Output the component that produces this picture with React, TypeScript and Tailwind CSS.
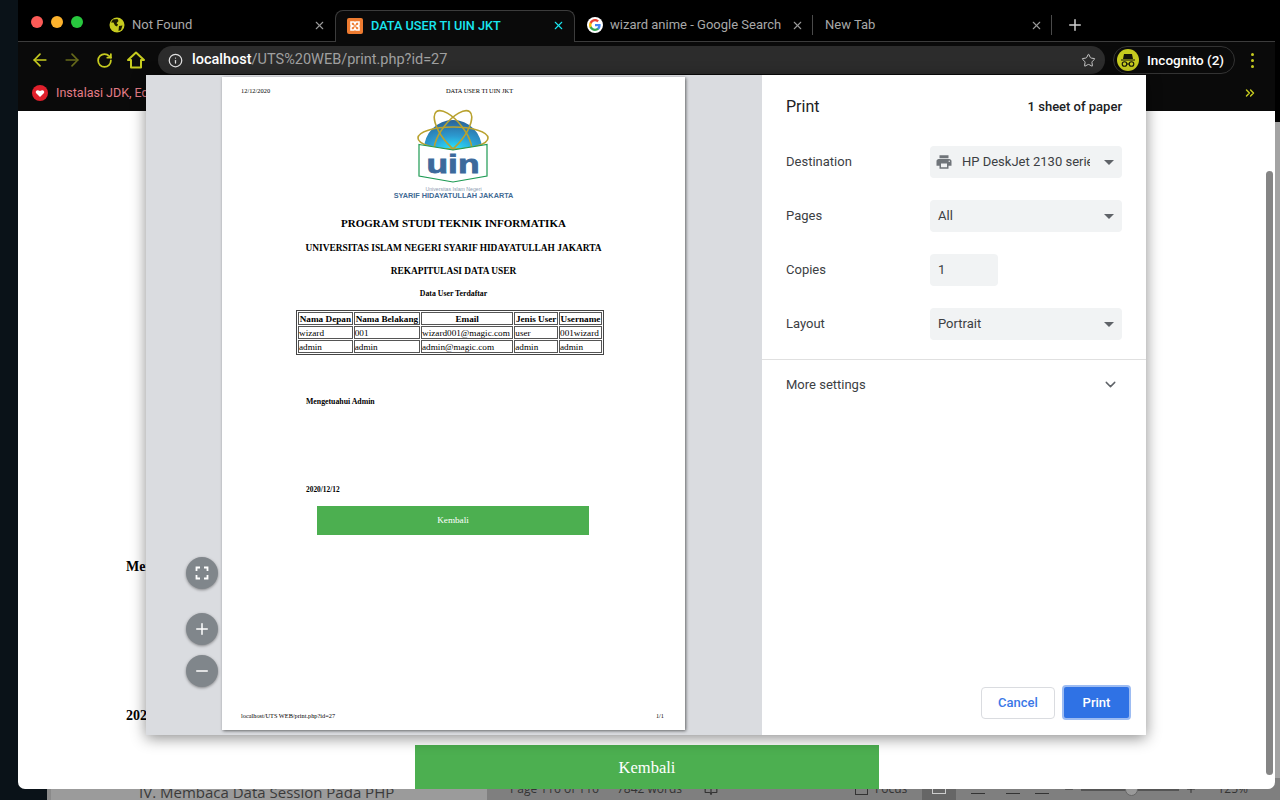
import { ArrowLeft, ArrowRight, BookOpen, ChevronDown, ChevronsRight, Info, Minus, Plus, RotateCw, Star, X } from 'lucide-react';

const ui = "font-['Roboto',sans-serif]";
const serif = "font-['Liberation_Serif',serif]";

function GlobeIcon() {
  return (
    <svg width="16" height="16" viewBox="0 0 16 16" className="shrink-0">
      <circle cx="8" cy="8" r="7.5" fill="#c6cb1f" />
      <path d="M4 2.5 8.5 2l1 2-2 2.2 1.5 1.3-1 2-2-1-1.500-3L2 5.500ZM10 9l3.500-.5L12 13l-2.500 1Z" fill="#1a1a00" />
    </svg>
  );
}

function XamppIcon() {
  return (
    <svg width="16" height="16" viewBox="0 0 16 16" className="shrink-0">
      <rect width="16" height="16" rx="2" fill="#ee7b30" />
      <path d="M4 4h3l1 2 1-2h3v3l-2 1 2 1v3H9L8 10l-1 2H4V9l2-1-2-1Z" fill="none" stroke="#fff" strokeWidth="1.6" />
    </svg>
  );
}

function GoogleIcon() {
  return (
    <svg width="16" height="16" viewBox="0 0 48 48" className="shrink-0">
      <circle cx="24" cy="24" r="24" fill="#fff" />
      <path fill="#4285F4" d="M41 24.500c0-1.300-.1-2.500-.3-3.700H24v7h9.600c-.4 2.200-1.700 4.100-3.500 5.300v4.500h5.700C39.100 34.500 41 30 41 24.500z" />
      <path fill="#34A853" d="M24 42c4.800 0 8.800-1.600 11.800-4.300l-5.700-4.500c-1.600 1.100-3.600 1.700-6.100 1.700-4.600 0-8.600-3.100-10-7.300H8.100v4.600C11 37.900 17 42 24 42z" />
      <path fill="#FBBC05" d="M14 27.600c-.4-1.100-.6-2.300-.6-3.600s.2-2.500.6-3.600v-4.600H8.100C6.800 18.200 6 21 6 24s.8 5.800 2.100 8.200z" />
      <path fill="#EA4335" d="M24 13.100c2.600 0 5 .9 6.800 2.700l5.100-5.100C32.800 7.800 28.800 6 24 6 17 6 11 10.100 8.100 15.800l5.900 4.600c1.400-4.200 5.400-7.300 10-7.300z" />
    </svg>
  );
}

function Tab({ icon, title, width, active, sep }: { icon?: React.ReactNode; title: string; width: string; active?: boolean; sep?: boolean }) {
  return (
    <div className={`${width} h-[32px] flex items-center shrink-0 relative pb-[2px] ${active ? 'bg-[#0a0a0a] border border-b-0 border-[#3c3c3c] rounded-t-[8px] pl-[11px] pr-[9px] text-[#19e6f0]' : 'text-[#a8a8a8] pl-[12px] pr-[9px]'}`}>
      {icon}
      <span className={`${active ? 'ml-[8px] text-[12.700px] font-medium' : icon ? 'ml-[7px] text-[13px]' : 'text-[13px]'} whitespace-nowrap flex-1`}>{title}</span>
      <X size={13} strokeWidth={2} className={active ? 'text-[#19e6f0]' : 'text-[#9a9a9a]'} />
      {sep && <div className="absolute right-0 top-[5px] h-[20px] w-px bg-[#4a4a4a]" />}
    </div>
  );
}

function Logo() {
  return (
    <svg width="76" height="78" viewBox="0 0 76 78" className="block">
      <defs>
        <radialGradient id="dome" cx="50%" cy="100%" r="100%">
          <stop offset="0%" stopColor="#27e6ff" />
          <stop offset="45%" stopColor="#2c9ad0" />
          <stop offset="100%" stopColor="#2b6296" />
        </radialGradient>
      </defs>
      <path d="M8 40a29 29 0 0 1 58 0Z" fill="url(#dome)" />
      <g fill="none" stroke="#b9a22f" strokeWidth="1.600">
        <ellipse cx="37" cy="29" rx="35" ry="11" />
        <ellipse cx="37" cy="24" rx="27" ry="11" transform="rotate(52 37 24)" />
        <ellipse cx="37" cy="24" rx="27" ry="11" transform="rotate(-52 37 24)" />
      </g>
      <path d="M3 35.500 37 41l34-5.500V67L37 73 3 67Z" fill="#fff" stroke="#1d9a53" strokeWidth="1.200" />
      <text x="37" y="63.500" textAnchor="middle" textLength="53" lengthAdjust="spacingAndGlyphs" fill="#3c6a9c" stroke="#3c6a9c" strokeWidth="0.800" fontFamily="Liberation Sans" fontWeight="700" fontSize="26">uin</text>
    </svg>
  );
}

function ZoomButton({ children, className }: { children: React.ReactNode; className: string }) {
  return (
    <div className={`absolute left-[40px] w-[32px] h-[32px] rounded-full bg-[#80868b] flex items-center justify-center shadow-[0_1px_3px_rgba(0,0,0,0.4)] text-white ${className}`}>
      {children}
    </div>
  );
}

function Caret() {
  return <div className="w-0 h-0 border-l-[5px] border-r-[5px] border-t-[5px] border-l-transparent border-r-transparent border-t-[#5f6368]" />;
}

function Row({ label, children }: { label: string; children: React.ReactNode }) {
  return (
    <div className="flex items-center h-[32px] mb-[22px]">
      <div className="w-[144px] text-[13px] text-[#3c4043]">{label}</div>
      {children}
    </div>
  );
}

const cell = 'border border-[#555] px-0 pt-[2px] pb-0 text-left whitespace-nowrap font-normal h-[13px] leading-[9px]';
const headCell = 'border border-[#555] px-0 pt-[2px] pb-0 whitespace-nowrap font-bold h-[13px] leading-[9px]';

const users = [
  ['wizard', '001', 'wizard001@magic.com', 'user', '001wizard'],
  ['admin', 'admin', 'admin@magic.com', 'admin', 'admin'],
];

function Paper() {
  return (
    <div className={`w-[463px] h-[653px] bg-white shadow-[1px_1px_3px_rgba(0,0,0,0.55)] relative flex flex-col shrink-0 text-black ${serif}`}>
      <div className="flex pt-[10px] pl-[19px] h-[22px] text-[6.400px] leading-[8px]">
        <span className="w-[105px]">12/12/2020</span>
        <span className="w-[267px] text-center">DATA USER TI UIN JKT</span>
      </div>
      <div className="flex flex-col items-center mt-[10px]">
        <Logo />
        <div className="font-['Liberation_Sans',sans-serif] text-[5.200px] leading-[6px] text-[#8d9cb2] mt-[-1px]">Universitas Islam Negeri</div>
        <div className="font-['Liberation_Sans',sans-serif] font-bold text-[7.300px] leading-[8px] text-[#3f6a94]">SYARIF HIDAYATULLAH JAKARTA</div>
      </div>
      <div className="text-center font-bold">
        <div className="text-[11px] leading-[13px] mt-[17px]">PROGRAM STUDI TEKNIK INFORMATIKA</div>
        <div className="text-[9.400px] leading-[11px] mt-[13px]">UNIVERSITAS ISLAM NEGERI SYARIF HIDAYATULLAH JAKARTA</div>
        <div className="text-[9.400px] leading-[11px] mt-[12px]">REKAPITULASI DATA USER</div>
        <div className="text-[7.800px] leading-[9px] mt-[12px]">Data User Terdaftar</div>
      </div>
      <table className="border border-[#444] border-separate border-spacing-[1px] text-[9.200px] ml-[74px] mt-[12px] w-[308px]">
        <thead>
          <tr>
            {['Nama Depan', 'Nama Belakang', 'Email', 'Jenis User', 'Username'].map(h => (
              <th key={h} className={headCell}>{h}</th>
            ))}
          </tr>
        </thead>
        <tbody>
          {users.map(u => (
            <tr key={u[0]}>
              {u.map((c, i) => <td key={i} className={cell}>{c}</td>)}
            </tr>
          ))}
        </tbody>
      </table>
      <div className="ml-[84px] mt-[42px] text-[7.800px] leading-[9px] font-bold">Mengetuahui Admin</div>
      <div className="ml-[84px] mt-[79px] text-[7.400px] leading-[9px] font-bold">2020/12/12</div>
      <div className="ml-[95px] mt-[12px] w-[272px] h-[29px] bg-[#4caf50] text-white text-[9.200px] flex items-center justify-center">Kembali</div>
      <div className="mt-auto mb-[10px] pl-[19px] pr-[21px] flex justify-between text-[6.300px] leading-[8px]">
        <span>localhost/UTS WEB/print.php?id=27</span>
        <span>1/1</span>
      </div>
    </div>
  );
}

function PrintDialog() {
  return (
    <div className={`absolute left-[146px] top-[75px] w-[1000px] h-[660px] flex shadow-[0_3px_14px_rgba(0,0,0,0.45)] ${ui}`}>
      <div className="w-[616px] bg-[#dadce0] relative pl-[76px] pt-[2px] flex">
        <Paper />
        <ZoomButton className="top-[482px]">
          <svg width="14" height="14" viewBox="0 0 14 14" fill="none" stroke="#fff" strokeWidth="1.800">
            <path d="M1.500 5V1.500H5M9 1.500h3.500V5M12.500 9v3.500H9M5 12.500H1.500V9" />
          </svg>
        </ZoomButton>
        <ZoomButton className="top-[538px]"><Plus size={18} strokeWidth={2} /></ZoomButton>
        <ZoomButton className="top-[580px]"><Minus size={18} strokeWidth={2} /></ZoomButton>
      </div>
      <div className="flex-1 bg-white flex flex-col">
        <div className="flex items-center justify-between pl-[24px] pr-[24px] h-[64px]">
          <div className="text-[16px] text-[#202124]">Print</div>
          <div className="text-[13px] font-medium text-[#202124]">1 sheet of paper</div>
        </div>
        <div className="pl-[24px] pr-[24px] pt-[7px]">
          <Row label="Destination">
            <div className="w-[192px] h-[32px] rounded-[4px] bg-[#f1f3f4] flex items-center pl-[5px] pr-[8px]">
              <svg width="18" height="18" viewBox="0 0 24 24" fill="#70757a" className="shrink-0">
                <path d="M19 8H5c-1.660 0-3 1.340-3 3v6h4v4h12v-4h4v-6c0-1.660-1.340-3-3-3zm-3 11H8v-5h8v5zm3-7c-.55 0-1-.45-1-1s.45-1 1-1 1 .45 1 1-.45 1-1 1zm-1-9H6v4h12V3z" />
              </svg>
              <div className="ml-[9px] w-[128px] overflow-hidden whitespace-nowrap text-[13px] text-[#3c4043]">HP DeskJet 2130 series</div>
              <div className="ml-auto"><Caret /></div>
            </div>
          </Row>
          <Row label="Pages">
            <div className="w-[192px] h-[32px] rounded-[4px] bg-[#f1f3f4] flex items-center pl-[8px] pr-[8px] text-[13px] text-[#3c4043] justify-between">
              <span>All</span>
              <Caret />
            </div>
          </Row>
          <Row label="Copies">
            <div className="w-[68px] h-[32px] rounded-[4px] bg-[#f1f3f4] flex items-center pl-[8px] text-[13px] text-[#3c4043]">1</div>
          </Row>
          <div className="flex items-center h-[32px]">
            <div className="w-[144px] text-[13px] text-[#3c4043]">Layout</div>
            <div className="w-[192px] h-[32px] rounded-[4px] bg-[#f1f3f4] flex items-center pl-[8px] pr-[8px] text-[13px] text-[#3c4043] justify-between">
              <span>Portrait</span>
              <Caret />
            </div>
          </div>
        </div>
        <div className="mt-[19px] border-t border-[#e0e0e0] flex items-center justify-between pl-[24px] pr-[27px] h-[50px]">
          <span className="text-[13px] text-[#3c4043]">More settings</span>
          <ChevronDown size={17} strokeWidth={2} className="text-[#5f6368]" />
        </div>
        <div className="mt-auto flex items-center justify-end gap-[7px] pr-[15px] pb-[15px]">
          <div className="w-[74px] h-[32px] rounded-[4px] border border-[#dadce0] bg-white text-[#3b78e7] text-[13px] font-medium flex items-center justify-center">Cancel</div>
          <div className="w-[69px] h-[35px] rounded-[4px] border-2 border-[#9dbcf2] bg-[#2f72e5] text-white text-[13px] font-medium flex items-center justify-center">Print</div>
        </div>
      </div>
    </div>
  );
}

function Browser() {
  return (
    <div className={`absolute left-[18px] top-0 w-[1257px] h-[789px] flex flex-col overflow-hidden rounded-b-[7px] ${ui}`}>
      <div className="h-[42px] shrink-0 bg-black border-b border-[#3c3c3c] flex items-end">
        <div className="w-[79px] h-[32px] shrink-0 flex items-start gap-[8px] pl-[13px] pt-[6px] mb-[-1px]">
          <div className="w-[12px] h-[12px] rounded-full bg-[#fc5b57]" />
          <div className="w-[12px] h-[12px] rounded-full bg-[#fdb32d]" />
          <div className="w-[12px] h-[12px] rounded-full bg-[#28c83e]" />
        </div>
        <div className="flex items-end mb-[-1px] relative">
          <Tab icon={<GlobeIcon />} title="Not Found" width="w-[238px]" />
          <Tab icon={<XamppIcon />} title="DATA USER TI UIN JKT" width="w-[240px]" active />
          <Tab icon={<GoogleIcon />} title="wizard anime - Google Search" width="w-[238px]" sep />
          <Tab title="New Tab" width="w-[239px]" sep />
          <Plus size={18} strokeWidth={2} className="text-[#cfcfcf] ml-[14px] mb-[8px]" />
        </div>
      </div>
      <div className="h-[33px] shrink-0 bg-[#0a0a0a] flex items-center pt-[3px] pl-[12px] text-[#c6cb1f]">
        <ArrowLeft size={20} strokeWidth={2} />
        <ArrowRight size={20} strokeWidth={2} className="ml-[12px] text-[#66691a]" />
        <RotateCw size={17} strokeWidth={2.500} className="ml-[14px]" />
        <svg width="20" height="20" viewBox="0 0 20 20" fill="none" stroke="#c6cb1f" strokeWidth="2" className="ml-[13px]">
          <path d="M10 2.500 2 10h3v7.500h10V10h3Z" strokeLinejoin="round" />
        </svg>
        <div className="ml-[12px] w-[947px] h-[28px] rounded-full bg-[#2c2c2c] flex items-center pl-[10px] pr-[9px] shrink-0">
          <Info size={15} strokeWidth={2} className="text-[#e0e0e0]" />
          <div className="ml-[9px] text-[14.500px] whitespace-nowrap text-[#a0a0a0]"><span className="text-white font-medium">localhost</span>/UTS%20WEB/print.php?id=27</div>
          <Star size={15} strokeWidth={1.600} className="ml-auto text-[#c8c8c8]" />
        </div>
        <div className="ml-[8px] w-[122px] h-[28px] rounded-full border border-[#333] flex items-center pl-[3px] shrink-0">
          <svg width="22" height="22" viewBox="0 0 22 22" className="shrink-0">
            <circle cx="11" cy="11" r="11" fill="#c6cb1f" />
            <path d="M7 5h8l1 5H6Z M4 10.500h14v1H4Z" fill="#14140a" />
            <g fill="none" stroke="#14140a" strokeWidth="1.100">
              <circle cx="7.500" cy="15" r="2.300" />
              <circle cx="14.500" cy="15" r="2.300" />
              <path d="M9.800 15h2.400" />
            </g>
          </svg>
          <span className="ml-[8px] text-[13.500px] text-white font-medium whitespace-nowrap">Incognito (2)</span>
        </div>
        <div className="ml-[16px] flex flex-col gap-[3px]">
          <div className="w-[3px] h-[3px] rounded-full bg-[#c6cb1f]" />
          <div className="w-[3px] h-[3px] rounded-full bg-[#c6cb1f]" />
          <div className="w-[3px] h-[3px] rounded-full bg-[#c6cb1f]" />
        </div>
      </div>
      <div className="h-[36px] shrink-0 bg-[#0a0a0a] flex items-center pl-[14px] pr-[18px]">
        <div className="w-[16px] h-[16px] rounded-full bg-[#e0202c] flex items-center justify-center shrink-0">
          <svg width="10" height="10" viewBox="0 0 10 10" fill="#fff"><path d="M5 9 1 5c-1-2 1-4 4-2 3-2 5 0 4 2Z" /></svg>
        </div>
        <span className="ml-[8px] text-[12.500px] text-[#e47d88] whitespace-nowrap">Instalasi JDK, Eclipse</span>
        <ChevronsRight size={14} strokeWidth={2.500} className="ml-auto text-[#c6cb1f]" />
      </div>
      <div className={`flex-1 bg-white relative pt-[448px] ${serif}`}>
        <div className="pl-[108px] text-[14px] leading-[16px] font-bold text-black">Mengetahui Admin</div>
        <div className="pl-[108px] mt-[133px] text-[14px] leading-[16px] font-bold text-black">2020/12/12</div>
        <div className="ml-[397px] mt-[21px] w-[464px] h-[44px] bg-[#4caf50] text-white text-[16.500px] pt-[3px] flex items-center justify-center">Kembali</div>
        <div className="absolute left-[1248px] top-[60px] w-[7px] h-[604px] rounded-full bg-[#858585]" />
      </div>
    </div>
  );
}

function WordWindow() {
  return (
    <div className="absolute left-[47px] top-[122px] right-0 bottom-0 bg-[#a3a3a3] flex items-end font-['Open_Sans',sans-serif] text-[#3a3a3a]">
      <div className="w-[440px] h-[22px] shrink-0 bg-[#9b9b9b] pl-[88px] text-[15px] leading-[20px] pt-[1px] whitespace-nowrap border-l-[4px] border-[#8a8a8a] translate-y-[3px] box-border">IV. Membaca Data Session Pada PHP</div>
      <div className="flex-1 h-[22px] bg-[#7f7f7f] flex items-center text-[12px] text-[#333] whitespace-nowrap pl-[23px]">
        <span className="w-[76px]">Page 116 of 116</span>
        <span className="ml-[31px] w-[68px]">7842 words</span>
        <BookOpen size={14} className="ml-[19px]" />
        <div className="ml-[137px] w-[13px] h-[11px] border border-[#333]" />
        <span className="ml-[7px] w-[34px]">Focus</span>
        <div className="ml-[13px] w-[34px] h-[22px] bg-[#666] flex items-center justify-center">
          <div className="w-[14px] h-[9px] border border-[#ccc]" />
        </div>
        <div className="ml-[15px] w-[14px] h-[9px] border-y border-[#333]" />
        <div className="ml-[21px] w-[14px] h-[9px] border-y border-[#333]" />
        <div className="ml-[15px] w-[14px] h-[9px] border-y border-[#333]" />
        <Minus size={12} className="ml-[14px]" />
        <div className="ml-[6px] w-[98px] h-[3px] bg-[#555] relative">
          <div className="absolute left-[44px] top-[-5px] w-[13px] h-[13px] rounded-full bg-[#999] border border-[#666]" />
        </div>
        <Plus size={12} className="ml-[6px]" />
        <span className="ml-auto mr-[32px]">125%</span>
      </div>
    </div>
  );
}

export default function App() {
  return (
    <div className="relative w-[1280px] h-[800px] overflow-hidden bg-[#0a1218]">
      <div className="absolute left-[18px] top-0 right-0 h-[122px] bg-black" />
      <WordWindow />
      <Browser />
      <PrintDialog />
    </div>
  );
}
